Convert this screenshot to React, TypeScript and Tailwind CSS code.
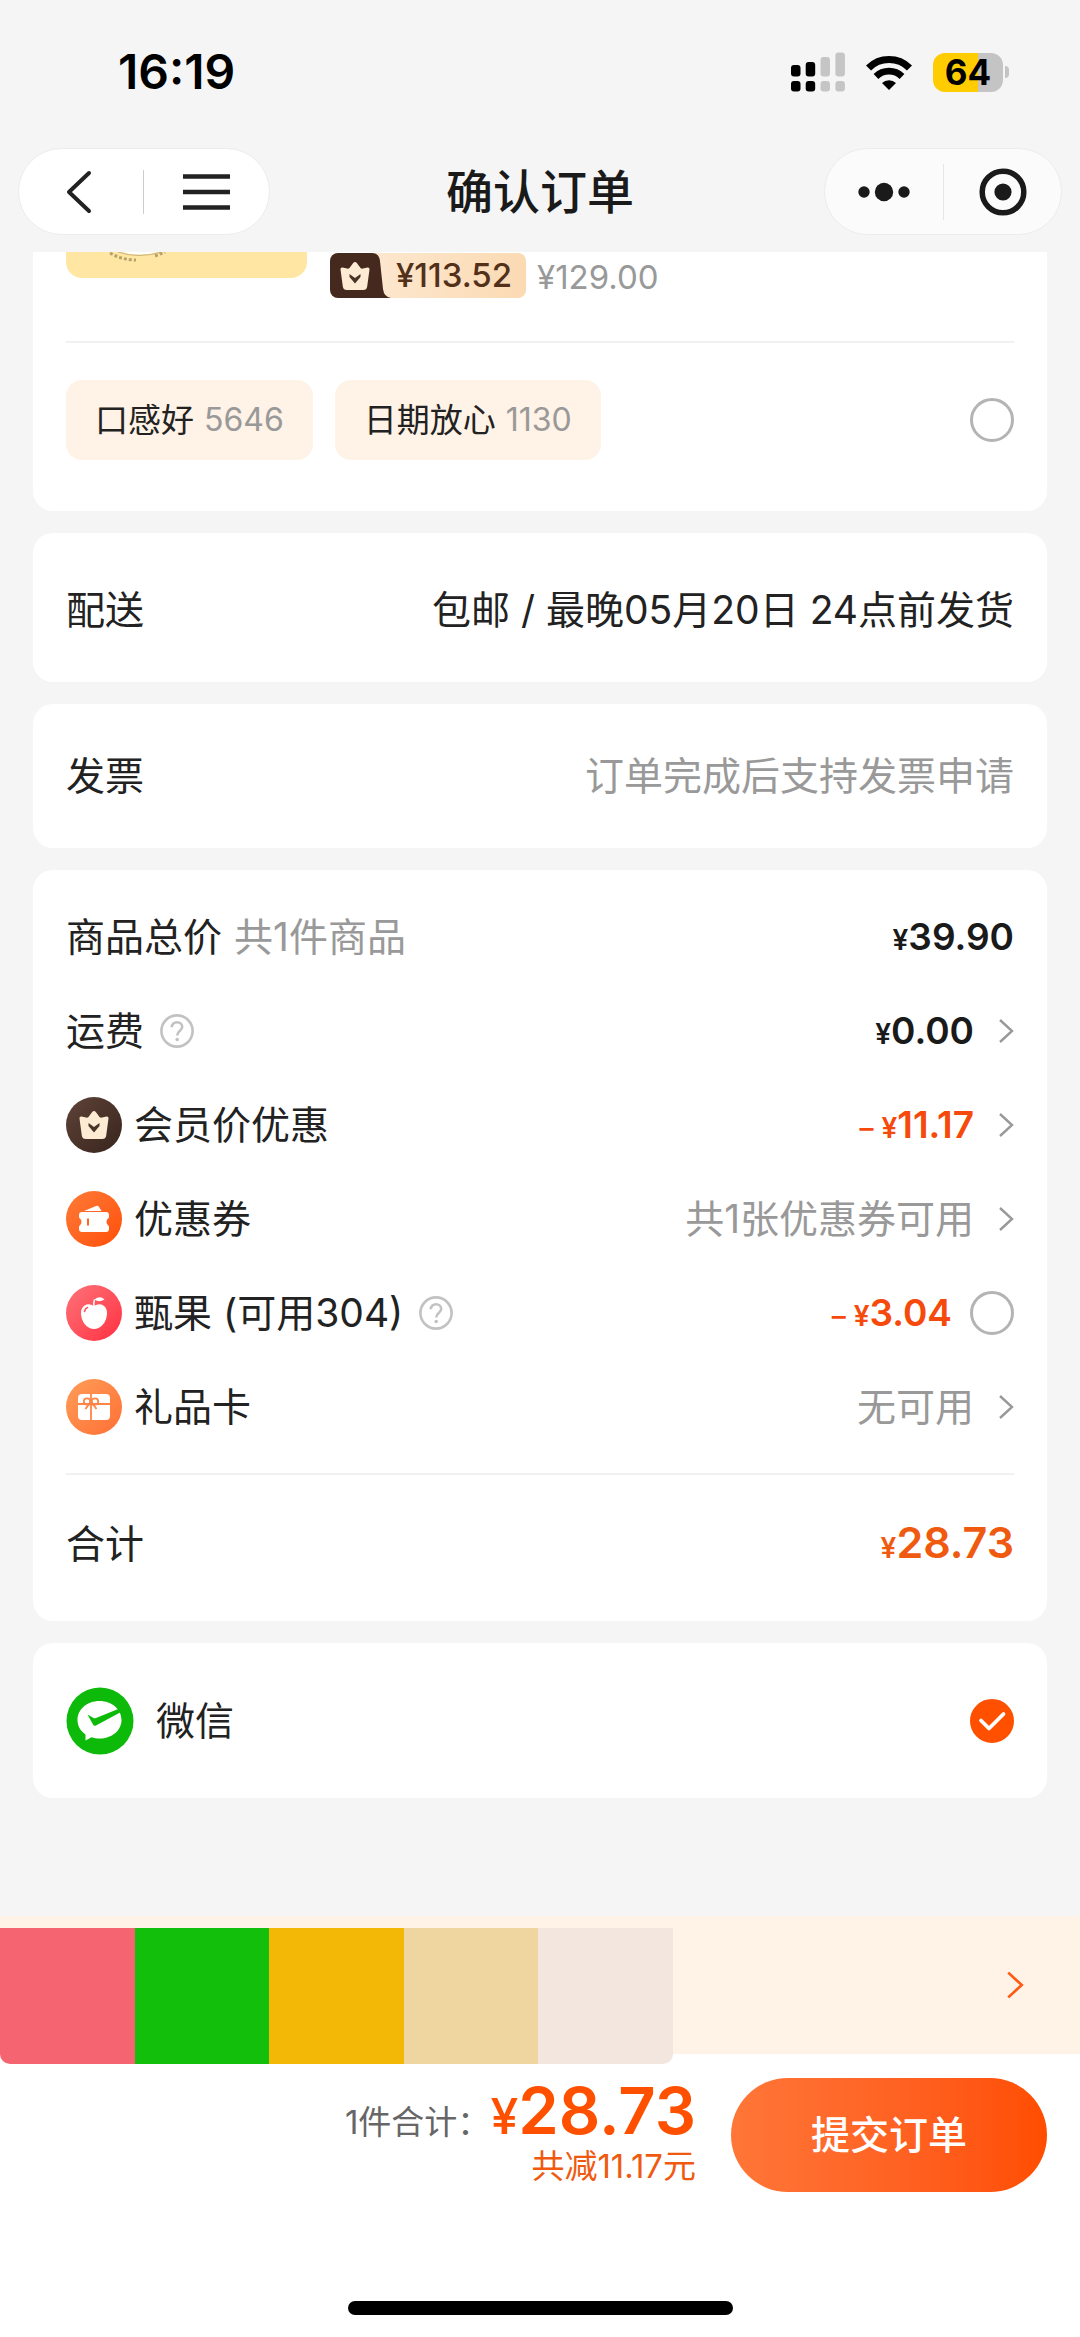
import { useState, type ReactNode } from "react";

interface IconProps {
  className?: string;
}

function Signal() {
  return (
    <svg viewBox="0 0 54 40" className="h-[40px] w-[54px]">
      <g fill="#000">
        <rect x="0" y="13" width="9.500" height="11.500" rx="3" />
        <rect x="14.700" y="10" width="9.500" height="14.500" rx="3" />
        <rect x="0" y="29" width="9.500" height="10.500" rx="3" />
        <rect x="14.700" y="29" width="9.500" height="10.500" rx="3" />
      </g>
      <g fill="#c5c5c5">
        <rect x="29.500" y="5" width="9.500" height="19.500" rx="3" />
        <rect x="44.400" y="0.500" width="9.500" height="24" rx="3" />
        <rect x="29.500" y="29" width="9.500" height="10.500" rx="3" />
        <rect x="44.400" y="29" width="9.500" height="10.500" rx="3" />
      </g>
    </svg>
  );
}

function Wifi() {
  return (
    <svg viewBox="0 0 46 35" className="h-[35px] w-[46px]" fill="none" stroke="#000">
      <path d="M2.500 13 A29 29 0 0 1 43.500 13" strokeWidth="7.200" />
      <path d="M10 21.500 A18.500 18.500 0 0 1 36 21.500" strokeWidth="6.800" />
      <path d="M16 28 A10.500 10.500 0 0 1 30 28 L23 35 Z" fill="#000" stroke="none" />
    </svg>
  );
}

function Battery() {
  return (
    <div className="flex items-center gap-[2px]">
      <div className="flex h-[39px] w-[70px] items-center justify-center rounded-[12px] bg-[linear-gradient(90deg,#ffcc00_64%,#c4c4c4_64%)] text-[35px] leading-none font-bold text-black">
        64
      </div>
      <div className="h-[12px] w-[4px] rounded-r-full bg-[#c4c4c4]" />
    </div>
  );
}

function Chevron({ className = "" }: IconProps) {
  return (
    <svg viewBox="0 0 16 26" className={className} fill="none" stroke="currentColor" strokeWidth="2.400">
      <path d="M2 2 L14 13 L2 24" />
    </svg>
  );
}

function Crown({ className = "", hole = "#4a3328" }: IconProps & { hole?: string }) {
  return (
    <svg viewBox="0 0 30 30" className={className}>
      <path
        d="M15 1 Q16 1 17 2.200 L20.500 7 Q21.500 8 23 7.600 L27.500 6.600 Q29.800 6.400 29.500 8.600 L27.200 25.500 Q26.700 29 23.200 29 H6.800 Q3.300 29 2.800 25.500 L0.500 8.600 Q0.200 6.400 2.500 6.600 L7 7.600 Q8.500 8 9.500 7 L13 2.200 Q14 1 15 1 Z"
        fill="#fdebd3"
      />
      <path d="M9.500 13 L15 17 L20.500 13 V16 L15 22.500 L9.500 16 Z" fill={hole} />
    </svg>
  );
}

function MemberIcon() {
  return (
    <span className="flex size-[56px] items-center justify-center rounded-full bg-linear-to-br from-[#5f4338] to-[#38251d]">
      <Crown className="size-[30px]" />
    </span>
  );
}

function CouponIcon() {
  return (
    <span className="flex size-[56px] items-center justify-center rounded-full bg-linear-to-br from-[#ff7a35] to-[#ff4d00]">
      <svg viewBox="0 0 32 28" className="h-[28px] w-[32px]" fill="#fff">
        <path d="M6 6 L18 1 Q20 0.300 21 2 L23.500 6 Z" />
        <path
          fillRule="evenodd"
          d="M4 7 H28 Q31 7 31 10 V12.500 Q28.500 14.500 28.500 17 Q28.500 19.500 31 21.500 V24 Q31 27 28 27 H4 Q1 27 1 24 V21.500 Q3.500 19.500 3.500 17 Q3.500 14.500 1 12.500 V10 Q1 7 4 7 Z M9 13.500 V20.500 H11 V13.500 Z"
        />
      </svg>
    </span>
  );
}

function AppleIcon() {
  return (
    <span className="flex size-[56px] items-center justify-center rounded-full bg-linear-to-br from-[#ff7078] to-[#ff2740]">
      <svg viewBox="0 0 28 34" className="h-[34px] w-[28px]">
        <path
          d="M14 10 Q18 7.500 21.500 8.500 Q27.500 10.500 27 18.500 Q26 28 18.500 32 Q14 34 9.500 32 Q2 28 1 18.500 Q0.500 10.500 6.500 8.500 Q10 7.500 14 10 Z"
          fill="#fff"
        />
        <path d="M14 10 Q13.500 6.500 14.500 3.500" fill="none" stroke="#fff" strokeWidth="1.500" />
        <path d="M14.500 3.500 Q20 -1 24.500 3.500 Q19 7 14.500 3.500 Z" fill="#fff" />
        <path d="M4.500 15.500 Q5 12.500 7.500 11.500" fill="none" stroke="#ff5263" strokeWidth="1.600" strokeLinecap="round" />
      </svg>
    </span>
  );
}

function GiftIcon() {
  return (
    <span className="flex size-[56px] items-center justify-center rounded-full bg-linear-to-br from-[#ff9c58] to-[#ff6f33]">
      <svg viewBox="0 0 32 26" className="h-[26px] w-[32px]">
        <rect width="32" height="26" rx="4" fill="#fff" />
        <g fill="none" stroke="#ff8446" strokeWidth="1.800">
          <path d="M0 10 H32 M13 0 V26" />
          <circle cx="9" cy="7.500" r="3.200" />
          <circle cx="17" cy="7.500" r="3.200" />
          <path d="M13 9.500 Q9.500 11 7.500 15 M13 9.500 Q16.500 11 18.500 15" />
        </g>
      </svg>
    </span>
  );
}

function WechatPayIcon() {
  return (
    <svg viewBox="0 0 68 68" className="size-[68px]">
      <circle cx="34" cy="34" r="33.500" fill="#0dba09" />
      <path
        d="M33.500 14 C46 14 55.500 22.500 55.500 33 C55.500 43.500 46 51.500 33.500 51.500 C30.500 51.500 28 51 25.500 50.200 L19.500 53.500 L19.500 47.500 C14.500 44 11.500 39 11.500 33 C11.500 22.500 21 14 33.500 14 Z"
        fill="#fff"
      />
      <path d="M21.500 27.500 L27.500 31 Q28.500 31.600 30 31 L53.500 21.500 L55 25 L30 38.500 Q28 39.500 27 37.500 Z" fill="#0dba09" />
    </svg>
  );
}

function HelpButton() {
  return (
    <button type="button" aria-label="说明" className="ml-4 text-[#c2c2c2]">
      <svg viewBox="0 0 34 34" className="size-[34px]" fill="none" stroke="currentColor" strokeWidth="2.600">
        <circle cx="17" cy="17" r="15.600" />
        <path d="M11.800 13.200 C11.800 6.500 22.200 6.800 22.200 13 C22.200 17 17.200 16.500 17.200 21.500" />
        <circle cx="17.200" cy="25.500" r="1.800" fill="currentColor" stroke="none" />
      </svg>
    </button>
  );
}

function Card({ children, className = "" }: { children: ReactNode; className?: string }) {
  return <section className={`rounded-[20px] bg-white px-[33px] ${className}`}>{children}</section>;
}

interface PriceProps {
  value: string;
  minus?: boolean;
  className?: string;
}

function Price({ value, minus, className = "text-[37px] text-[#1a1a1a]" }: PriceProps) {
  return (
    <span className={`flex items-baseline pt-[2px] font-semibold ${className}`}>
      {minus && <span className="mr-2 text-[28px] font-medium">–</span>}
      <span className="text-[28px]">¥</span>
      {value}
    </span>
  );
}

interface RowProps {
  icon?: ReactNode;
  label: string;
  note?: string;
  help?: boolean;
  children: ReactNode;
}

function Row({ icon, label, note, help, children }: RowProps) {
  return (
    <li className="flex h-[94px] items-center justify-between">
      <div className="flex items-center">
        {icon && <span className="mr-3">{icon}</span>}
        <span>{label}</span>
        {note && <span className="ml-3 text-[#999]">{note}</span>}
        {help && <HelpButton />}
      </div>
      <div className="flex items-center">{children}</div>
    </li>
  );
}

const arrow = "ml-6 h-[26px] w-[16px] text-[#999]";
const round = "size-[44px] appearance-none rounded-full border-3 border-[#b4b4b4] checked:border-[#ff5000] checked:bg-[#ff5000]";

const tags = [
  { name: "口感好", count: 5646 },
  { name: "日期放心", count: 1130 },
];

const swatches = ["bg-[#f56571]", "bg-[#12c00b]", "bg-[#f3b805]", "bg-[#efd5a0]", "bg-[#f3e6de]"];

function Header() {
  return (
    <header className="h-[252px] bg-[#f5f5f5]">
      <div className="flex h-[148px] items-center justify-between pt-[4px] pr-[71px] pb-[8px] pl-[118px]">
        <span className="text-[48px] leading-none font-semibold text-black">16:19</span>
        <div className="flex items-center gap-[21px]">
          <Signal />
          <Wifi />
          <Battery />
        </div>
      </div>
      <div className="grid grid-cols-[1fr_auto_1fr] items-center px-[18px]">
        <div className="flex h-[87px] w-[252px] items-center rounded-full border border-[#ececec] bg-white">
          <button type="button" aria-label="返回" className="flex h-full w-[124px] items-center justify-center pr-[4px]">
            <svg viewBox="0 0 26 44" className="h-[44px] w-[26px]" fill="none" stroke="#222" strokeWidth="4" strokeLinecap="round">
              <path d="M23 3 L3 22 L23 41" strokeLinejoin="round" />
            </svg>
          </button>
          <span className="h-[44px] w-px bg-[#ccc]" />
          <button type="button" aria-label="菜单" className="flex h-full flex-1 items-center justify-center">
            <svg viewBox="0 0 47 36" className="h-[36px] w-[47px]" stroke="#222" strokeWidth="4.500">
              <path d="M0 2.500 H47 M0 18 H47 M0 33.500 H47" />
            </svg>
          </button>
        </div>
        <h1 className="text-[47px] leading-none font-medium text-[#1a1a1a]">确认订单</h1>
        <div className="flex h-[87px] w-[238px] items-center justify-self-end rounded-full border border-[#ececec] bg-[#fbfbfb]">
          <button type="button" aria-label="更多" className="flex h-full w-[118px] items-center justify-center">
            <svg viewBox="0 0 52 20" className="h-[20px] w-[52px]" fill="#1a1a1a">
              <circle cx="6" cy="10" r="5.700" />
              <circle cx="26" cy="10" r="9.200" />
              <circle cx="46" cy="10" r="5.700" />
            </svg>
          </button>
          <span className="h-[56px] w-px bg-[#e6e6e6]" />
          <button type="button" aria-label="关闭" className="flex h-full flex-1 items-center justify-center">
            <svg viewBox="0 0 48 48" className="size-[48px]" fill="none" stroke="#1a1a1a">
              <circle cx="24" cy="24" r="20.800" strokeWidth="5.500" />
              <circle cx="24" cy="24" r="8.600" fill="#1a1a1a" stroke="none" />
            </svg>
          </button>
        </div>
      </div>
    </header>
  );
}

function Product() {
  return (
    <section className="rounded-b-[20px] bg-white px-[33px] pb-[51px]">
      <div className="flex h-[91px] items-start border-b-2 border-[#f1f1f1]">
        <div className="h-[26px] w-[241px] overflow-hidden rounded-b-[16px] bg-[#ffe7a3]">
          <svg viewBox="0 0 241 26" className="h-[26px] w-[241px]" fill="none">
            <path d="M56 0 Q72 5 92 0 Z" fill="#fff" />
            <path d="M52 0 Q72 7 96 0" stroke="#c9b07a" strokeWidth="1" />
            <path d="M44 1 Q56 8 70 8 M89 4 L99 0" stroke="#b8a26c" strokeWidth="3" strokeDasharray="3 2" />
          </svg>
        </div>
        <div className="mt-px ml-[23px] flex h-[45px] w-[196px] overflow-hidden rounded-[8px] bg-linear-to-r from-[#fdebd6] to-[#fbdab3]">
          <div className="relative h-full w-[66px]">
            <svg viewBox="0 0 62 45" className="h-[45px] w-[62px]">
              <path d="M0 0 H42 Q49 0 50 8 L53 36 Q54 44 61 45 H0 Z" fill="#45291f" />
            </svg>
            <Crown className="absolute top-[8px] left-[10px] size-[30px]" />
          </div>
          <span className="text-[33px] leading-[44px] font-medium text-[#53301a]">¥113.52</span>
        </div>
        <span className="ml-[11px] text-[33px] leading-[50px] text-[#999]">¥129.00</span>
      </div>
      <div className="flex items-center justify-between pt-[37px]">
        <div className="flex gap-[22px]">
          {tags.map((tag) => (
            <button
              type="button"
              key={tag.name}
              className="flex h-[80px] items-center gap-[10px] rounded-[16px] bg-[#fff2e6] px-[29px] text-[33px]"
            >
              {tag.name}
              <span className="text-[32px] text-[#999]">{tag.count}</span>
            </button>
          ))}
        </div>
        <input type="radio" name="review" aria-label="选择商品" className={round} />
      </div>
    </section>
  );
}

function Footer() {
  return (
    <footer className="bg-white">
      <div className="relative flex h-[138px] items-center justify-end bg-[#fff2e6] pr-[56px]">
        <div className="absolute top-[12px] left-0 flex h-[136px] w-[673px] overflow-hidden rounded-b-[10px]">
          {swatches.map((color) => (
            <div key={color} className={`flex-1 ${color}`} />
          ))}
        </div>
        <Chevron className="h-[30px] w-[18px] text-[#ff5a14]" />
      </div>
      <div className="mt-[24px] flex h-[114px] items-center justify-end gap-[35px] pr-[33px]">
        <div className="flex flex-col items-end">
          <div className="flex h-[62px] items-baseline leading-[62px]">
            <span className="text-[33px] text-[#666]">1件合计：</span>
            <span className="text-[50px] font-medium text-[#ff5000]">¥</span>
            <span className="text-[65px] font-semibold text-[#ff5000]">28.73</span>
          </div>
          <span className="text-[33px] leading-[48px] text-[#f05a10]">共减11.17元</span>
        </div>
        <button
          type="button"
          className="h-[114px] w-[316px] rounded-full bg-linear-to-r from-[#ff7637] to-[#ff4d00] text-[39px] font-medium text-white"
        >
          提交订单
        </button>
      </div>
      <div className="mx-auto mt-[109px] h-[14px] w-[385px] rounded-full bg-black" />
      <div className="h-[22px]" />
    </footer>
  );
}

export default function App() {
  const [useFruit, setUseFruit] = useState(false);

  return (
    <div className="flex min-h-screen flex-col bg-[#f5f5f5] font-[Inter,'Noto_Sans_CJK_SC',sans-serif] text-[39px] leading-[56px] text-[#222]">
      <Header />
      <main className="flex grow flex-col gap-[22px] px-[33px]">
        <Product />
        <Card className="flex h-[149px] items-center justify-between pt-[4px]">
          <span>配送</span>
          <span>包邮 / 最晚05月20日 24点前发货</span>
        </Card>
        <Card className="flex h-[144px] items-center justify-between">
          <span>发票</span>
          <span className="text-[#999]">订单完成后支持发票申请</span>
        </Card>
        <Card className="pt-[20px]">
          <ul>
            <Row label="商品总价" note="共1件商品">
              <Price value="39.90" />
            </Row>
            <Row label="运费" help>
              <Price value="0.00" />
              <Chevron className={arrow} />
            </Row>
            <Row icon={<MemberIcon />} label="会员价优惠">
              <Price value="11.17" minus className="text-[37px] text-[#f54a0c]" />
              <Chevron className={arrow} />
            </Row>
            <Row icon={<CouponIcon />} label="优惠券">
              <span className="text-[#999]">共1张优惠券可用</span>
              <Chevron className={arrow} />
            </Row>
            <Row icon={<AppleIcon />} label="甄果 (可用304)" help>
              <Price value="3.04" minus className="text-[37px] text-[#f54a0c]" />
              <input
                type="checkbox"
                aria-label="使用甄果"
                checked={useFruit}
                onChange={(e) => setUseFruit(e.target.checked)}
                className={`ml-[18px] ${round}`}
              />
            </Row>
            <Row icon={<GiftIcon />} label="礼品卡">
              <span className="text-[#999]">无可用</span>
              <Chevron className={arrow} />
            </Row>
          </ul>
          <div className="mt-[19px] flex h-[148px] items-center justify-between border-t-2 border-[#f1f1f1] pb-[8px]">
            <span>合计</span>
            <Price value="28.73" className="text-[43px] text-[#f05a10]" />
          </div>
        </Card>
        <Card>
          <label className="flex h-[155px] items-center">
            <WechatPayIcon />
            <span className="ml-[22px]">微信</span>
            <span className="relative ml-auto flex size-[44px]">
              <input type="radio" name="pay" defaultChecked className={round} />
              <svg
                viewBox="0 0 44 44"
                className="pointer-events-none absolute inset-0"
                fill="none"
                stroke="#fff"
                strokeWidth="3.800"
                strokeLinecap="round"
                strokeLinejoin="round"
              >
                <path d="M11 21.500 L19 29.500 L33.500 15" />
              </svg>
            </span>
          </label>
        </Card>
        <div className="h-[96px]" />
      </main>
      <Footer />
    </div>
  );
}
